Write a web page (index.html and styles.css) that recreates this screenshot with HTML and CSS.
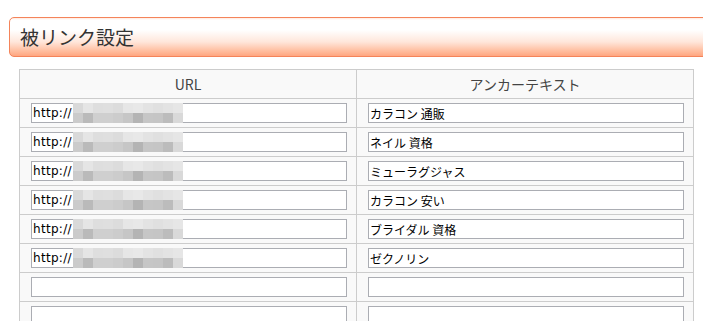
FILE: index.html
```html
<!DOCTYPE html>
<html lang="ja">
<head>
<meta charset="utf-8">
<title>被リンク設定</title>
<link rel="stylesheet" href="styles.css">
</head>
<body>
<div class="page">
  <h2 class="section-title">被リンク設定</h2>
  <table class="links">
    <thead>
      <tr><th>URL</th><th>アンカーテキスト</th></tr>
    </thead>
    <tbody>
      <tr><td><span class="field"><input class="url" type="text" value="http://"><span class="mosaic"></span></span></td><td><input class="anchor" type="text" value="カラコン 通販"></td></tr>
      <tr><td><span class="field"><input class="url" type="text" value="http://"><span class="mosaic"></span></span></td><td><input class="anchor" type="text" value="ネイル 資格"></td></tr>
      <tr><td><span class="field"><input class="url" type="text" value="http://"><span class="mosaic"></span></span></td><td><input class="anchor" type="text" value="ミューラグジャス"></td></tr>
      <tr><td><span class="field"><input class="url" type="text" value="http://"><span class="mosaic"></span></span></td><td><input class="anchor" type="text" value="カラコン 安い"></td></tr>
      <tr><td><span class="field"><input class="url" type="text" value="http://"><span class="mosaic"></span></span></td><td><input class="anchor" type="text" value="ブライダル 資格"></td></tr>
      <tr><td><span class="field"><input class="url" type="text" value="http://"><span class="mosaic"></span></span></td><td><input class="anchor" type="text" value="ゼクノリン"></td></tr>
      <tr><td><span class="field"><input class="url" type="text" value=""></span></td><td><input class="anchor" type="text" value=""></td></tr>
      <tr><td><span class="field"><input class="url" type="text" value=""></span></td><td><input class="anchor" type="text" value=""></td></tr>
    </tbody>
  </table>
</div>
</body>
</html>
```
FILE: styles.css
```css
html, body {
  margin: 0;
  padding: 0;
  background: #fff;
  overflow: hidden;
}

.page {
  padding: 17px 0 0 9px;
  width: 720px;
  font-family: "Noto Sans CJK JP", "Noto Sans", sans-serif;
}

.section-title {
  margin: 0;
  box-sizing: border-box;
  height: 40px;
  width: 720px;
  border: 1px solid #f4845a;
  border-radius: 5px;
  background: linear-gradient(to bottom, #ffe9df 0px, #fff 2px, #fff 12px, #ffe6da 24px, #ffc2a5 32px, #ffa680 38px);
  padding-left: 10px;
  font-size: 19px;
  font-weight: normal;
  line-height: 38px;
  color: #333;
}

.links {
  margin: 12px 0 0 10px;
  border-collapse: collapse;
  width: 675px;
  table-layout: fixed;
}

.links th,
.links td {
  border: 1px solid #cccccc;
  background: #f9f9f9;
  padding: 0;
}

.links th {
  height: 28px;
  font-size: 14px;
  font-weight: normal;
  color: #444;
  text-align: center;
  line-height: 28px;
}

.links td {
  height: 28px;
  padding: 0 0 0 11px;
  text-align: left;
  vertical-align: middle;
}

.field {
  position: relative;
  display: block;
  width: 316px;
  height: 20px;
}

input {
  display: block;
  box-sizing: border-box;
  width: 316px;
  height: 20px;
  margin: 0;
  border: 1px solid #abadb3;
  background: #fff;
  padding: 0 0 0 1px;
  font-size: 12px;
  color: #000;
  outline: none;
}

.url {
  font-family: "DejaVu Sans", sans-serif;
  letter-spacing: 0.3px;
}

.anchor {
  font-family: "Noto Sans CJK JP", sans-serif;
}

.mosaic {
  position: absolute;
  left: 42px;
  top: 0;
  width: 110px;
  height: 20px;
  background:
    linear-gradient(to right,
      #d9d9d9 0 10px, #e5e5e5 10px 20px, #dedede 20px 30px, #dfdfdf 30px 40px,
      #dcdcdc 40px 50px, #e6e6e6 50px 60px, #e8e8e8 60px 70px, #e3e3e3 70px 80px,
      #e0e0e0 80px 90px, #e3e3e3 90px 100px, #e6e6e6 100px 110px) top / 110px 10px no-repeat,
    linear-gradient(to right,
      #cbcbcb 0 10px, #bababa 10px 20px, #cfcfcf 20px 30px, #cfcfcf 30px 40px,
      #cccccc 40px 50px, #c6c6c6 50px 60px, #b4b4b4 60px 70px, #c6c6c6 70px 80px,
      #c5c5c5 80px 90px, #bcbcbc 90px 100px, #d9d9d9 100px 110px) bottom / 110px 10px no-repeat;
}
```
